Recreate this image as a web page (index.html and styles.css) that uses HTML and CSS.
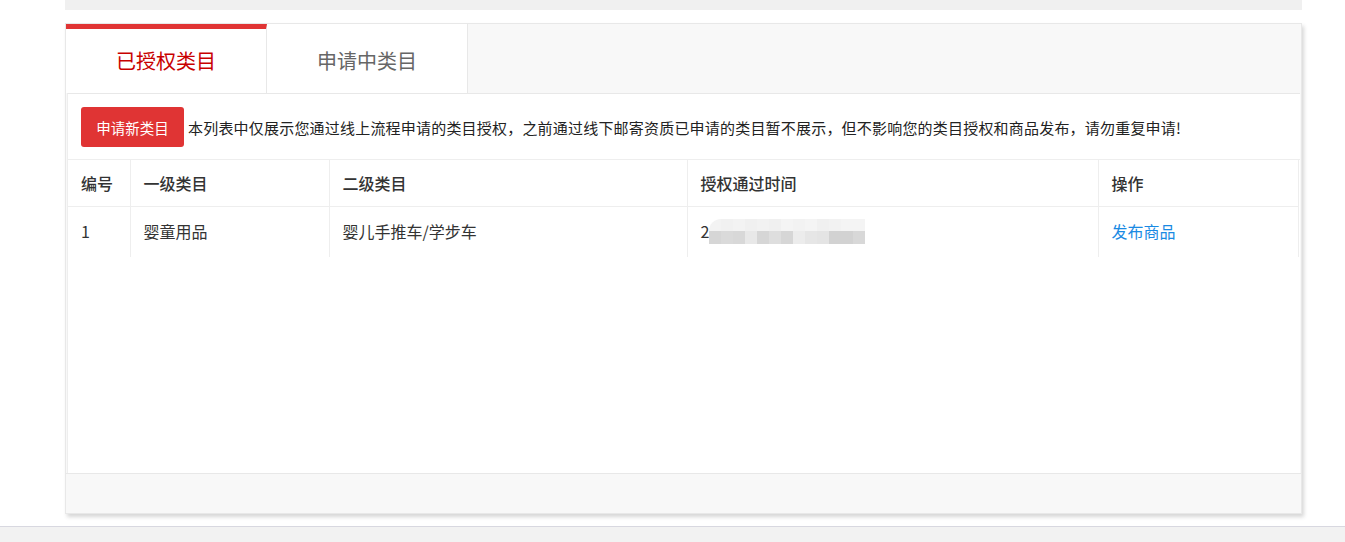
FILE: index.html
```html
<!DOCTYPE html>
<html lang="zh-CN">
<head>
  <meta charset="UTF-8">
  <meta name="viewport" content="width=device-width, initial-scale=1.0">
  <link rel="stylesheet" href="styles.css">
  <title>类目授权</title>
</head>
<body>

  <div class="topbar"></div>

  <div class="panel">
    <div class="tabs">
      <div class="tab tab_on">已授权类目</div>
      <div class="tab">申请中类目</div>
    </div>

    <div class="content">
      <div class="toolbar">
        <button class="btn_apply">申请新类目</button>
        <span class="tip">本列表中仅展示您通过线上流程申请的类目授权，之前通过线下邮寄资质已申请的类目暂不展示，但不影响您的类目授权和商品发布，请勿重复申请!</span>
      </div>

      <table class="cate_table">
        <colgroup>
          <col style="width:62px">
          <col style="width:199px">
          <col style="width:358px">
          <col style="width:411px">
          <col>
        </colgroup>
        <thead>
          <tr>
            <th>编号</th>
            <th>一级类目</th>
            <th>二级类目</th>
            <th>授权通过时间</th>
            <th>操作</th>
          </tr>
        </thead>
        <tbody>
          <tr>
            <td>1</td>
            <td>婴童用品</td>
            <td>婴儿手推车/学步车</td>
            <td>2<span class="mosaic"></span></td>
            <td><a class="link" href="#">发布商品</a></td>
          </tr>
        </tbody>
      </table>
    </div>

    <div class="footer"></div>
  </div>

  <div class="bottombar"></div>

</body>
</html>
```

FILE: styles.css
```css
body{
  margin:0;
  font-family:"Noto Sans CJK SC", "Noto Sans", sans-serif;
  background:#fff;
  color:#333;
}

.topbar{
  height:10px;
  margin:0 43px 0 65px;
  background:#f0f0f0;
}

.panel{
  margin:13px 43px 0 65px;
  border:1px solid #e8e8e8;
  background:#f8f8f8;
  box-shadow:2px 3px 4px rgba(0,0,0,.16);
}

/* 탭 */
.tabs{
  display:flex;
  height:69px;
}

.tab{
  width:201px;
  background:#fff;
  border-right:1px solid #e8e8e8;
  box-sizing:border-box;
  display:flex; align-items:center; justify-content:center;
  font-size:20px;
  color:#666;
  padding-top:3px;
}

.tab_on{
  border-top:5px solid #e03434;
  padding-top:0;
  padding-bottom:2px;
  color:#c80000;
}

.content{
  margin:0 1px 0 1px;
  height:379px;
  background:#fff;
  border-top:1px solid #e8e8e8;
  border-left:1px solid #eee;
}

.toolbar{
  display:flex; align-items:center;
  padding:13px 13px 12px 13px;
  border-bottom:1px solid #eee;
}

.btn_apply{
  width:103px; height:40px;
  border:0; border-radius:3px;
  background:#e03434;
  color:#fff;
  font-family:inherit;
  font-size:14.5px;
  margin-right:4px;
  padding:0;
}

.tip{
  font-size:15px;
  letter-spacing:0.2px;
  color:#222;
}

.cate_table{
  width:1231px;
  border-collapse:collapse;
  table-layout:fixed;
  font-size:16px;
}

.cate_table th,
.cate_table td{
  text-align:left;
  padding:0 13px;
  border-right:1px solid #eee;
  color:#333;
}

.cate_table th{
  height:46px;
  font-weight:500;
  border-bottom:1px solid #eee;
}

.cate_table td{
  height:48px;
  padding-bottom:2px;
}

.mosaic{
  display:inline-block;
  vertical-align:-6px;
  width:156px; height:25px;
  border-top-left-radius:12px;
  background:
    linear-gradient(90deg,#f3f3f3 0 12px,#f1f1f1 12px 24px,#f3f3f3 24px 36px,#f0f0f0 36px 48px,#f2f2f2 48px 60px,#f0f0f0 60px 72px,#f4f4f4 72px 84px,#f2f2f2 84px 96px,#f4f4f4 96px 108px,#f0f0f0 108px 120px,#f2f2f2 120px 132px,#f4f4f4 132px 156px) 0 0/100% 12px no-repeat,
    linear-gradient(90deg,#d6d6d6 0 12px,#dadada 12px 24px,#d8d8d8 24px 36px,#e8e8e8 36px 48px,#d6d6d6 48px 60px,#dedede 60px 72px,#d6d6d6 72px 84px,#ececec 84px 96px,#e6e6e6 96px 108px,#e4e4e4 108px 120px,#d2d2d2 120px 132px,#d2d2d2 132px 144px,#d8d8d8 144px 156px) 0 12px/100% 13px no-repeat;
}

.link{
  color:#1a8ae3;
  text-decoration:none;
}

.footer{
  height:39px;
  border-top:1px solid #e8e8e8;
  background:#f8f8f8;
}

.bottombar{
  margin-top:12px;
  height:16px;
  border-top:1px solid #d8d8e0;
  background:#f2f2f2;
}
```
